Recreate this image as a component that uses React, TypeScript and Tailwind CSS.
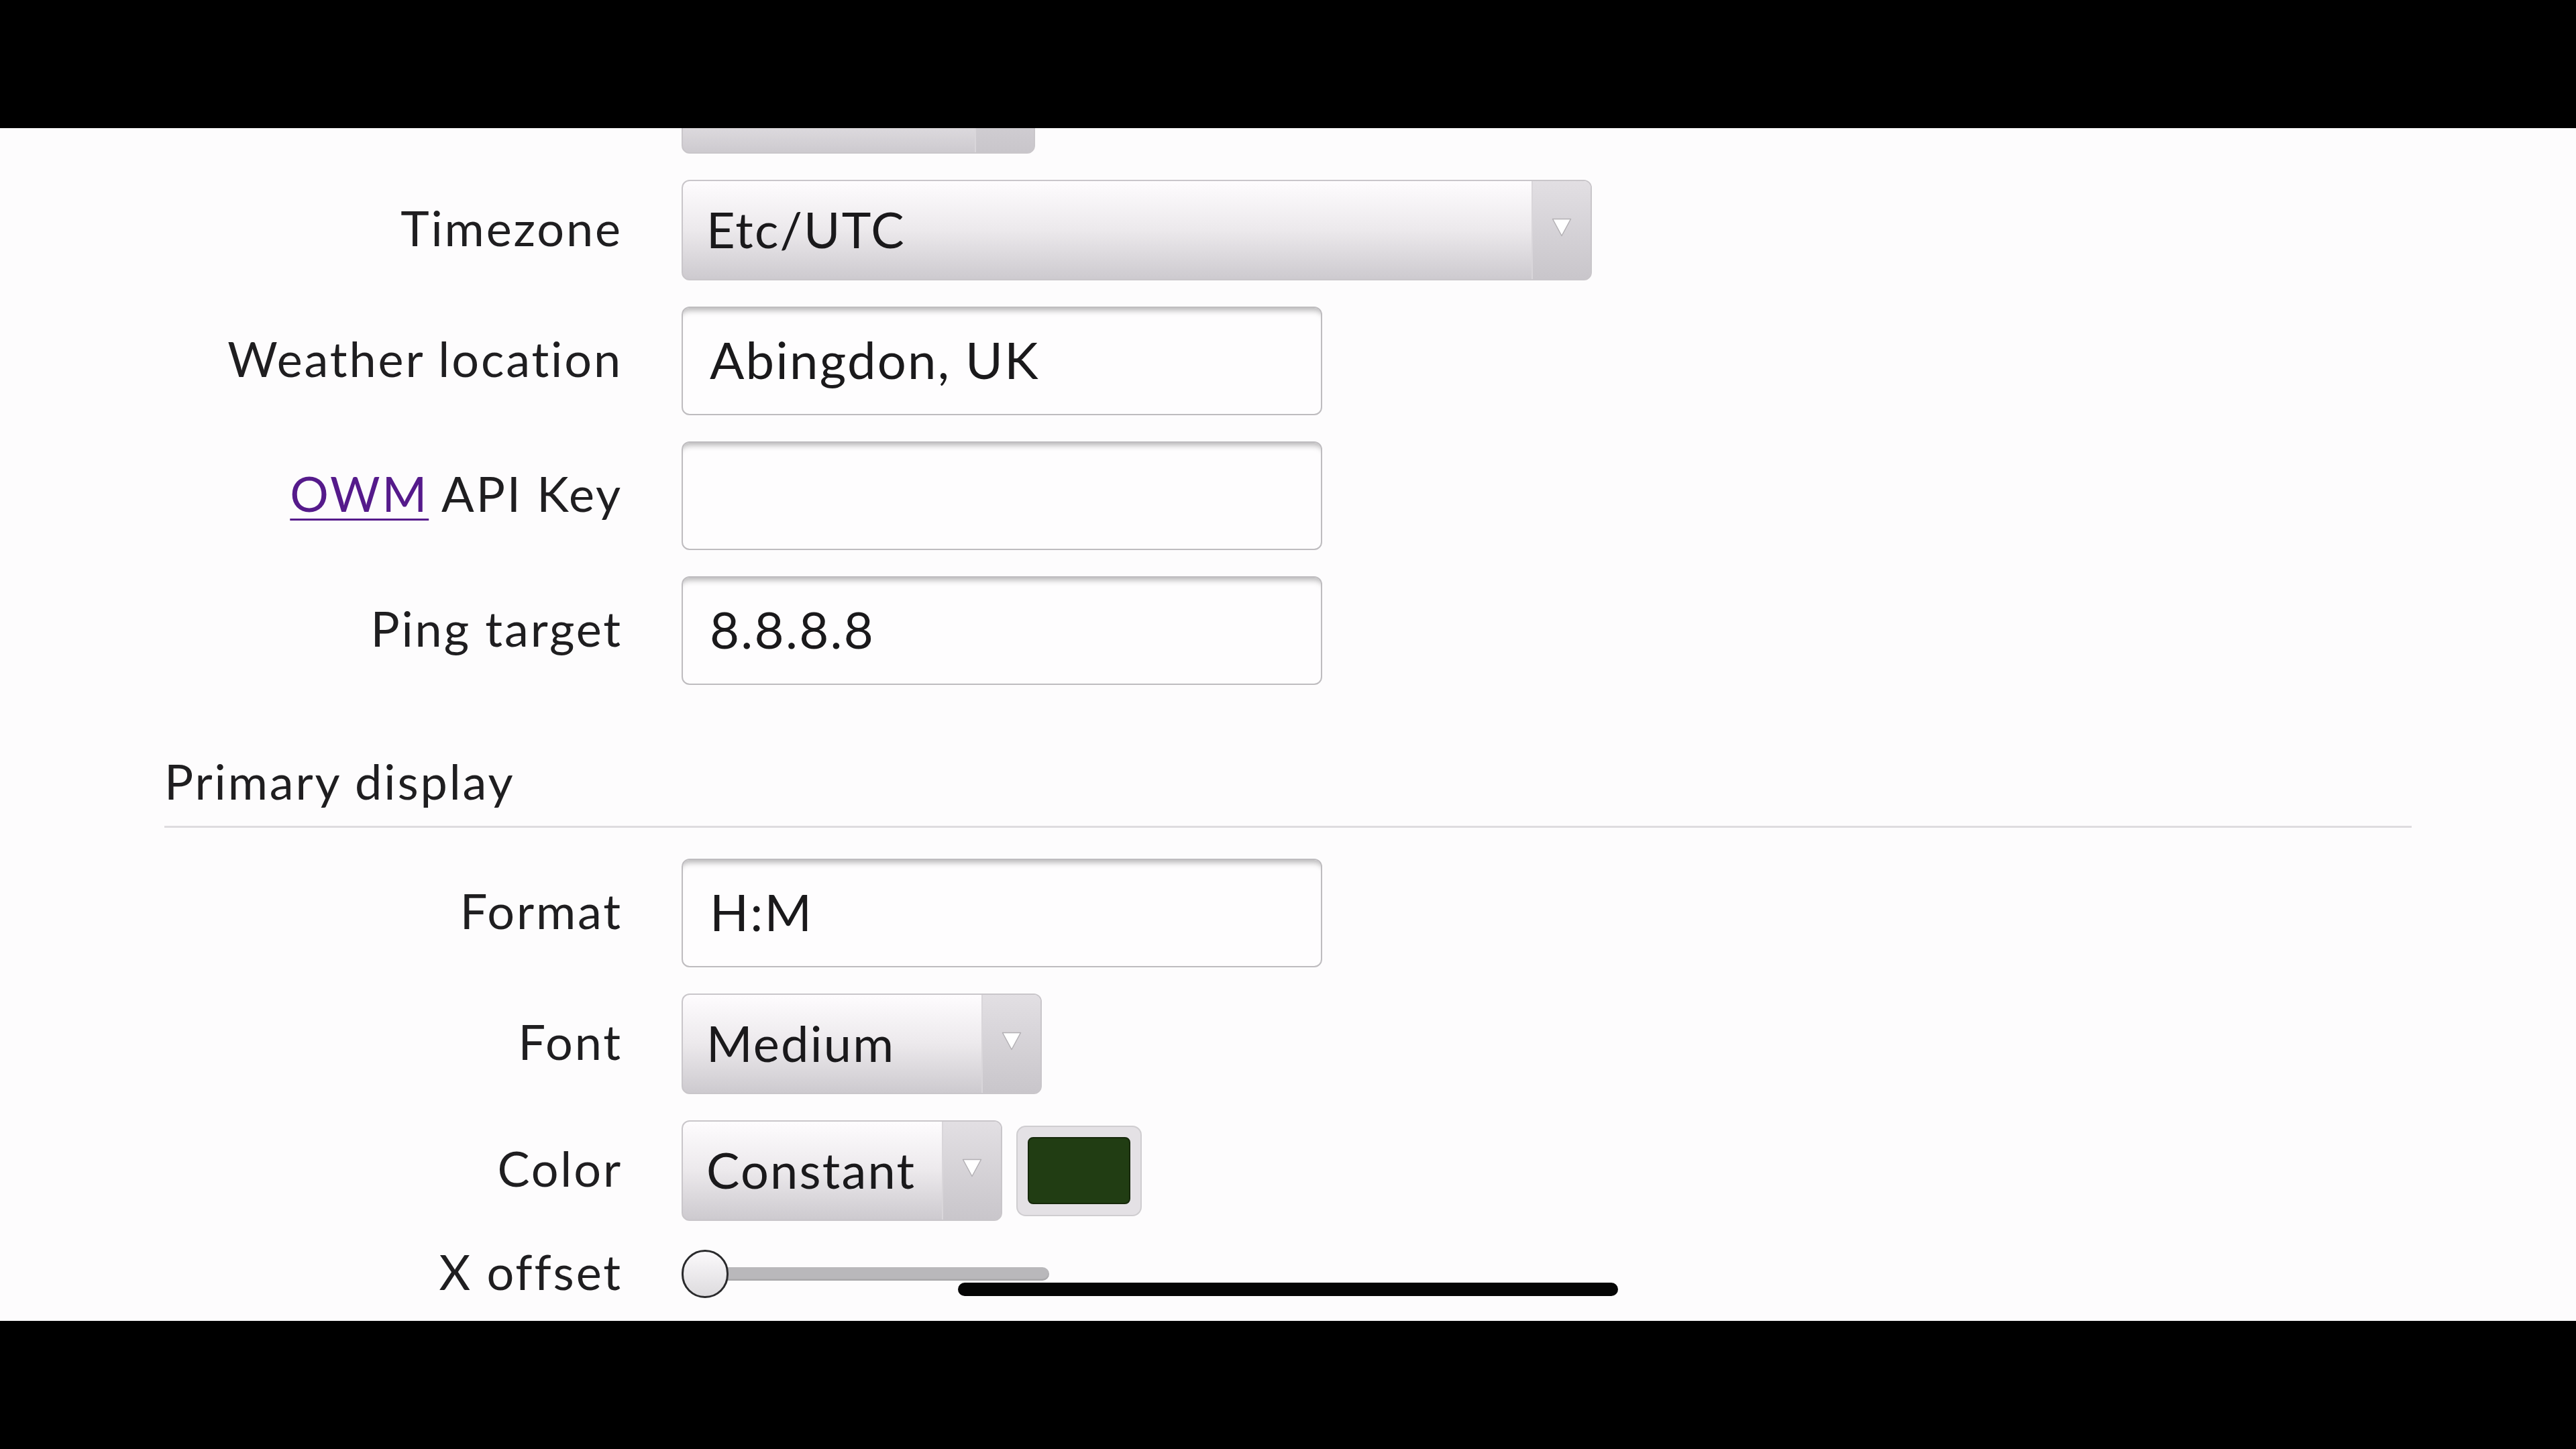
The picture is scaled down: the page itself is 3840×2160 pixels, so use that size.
import React from 'react';

const Arrow = () => (
    <svg width="30" height="28" viewBox="0 0 30 28">
        <path d="M1.5 1.5h27L15 26.5z" fill="#ffffff" stroke="#b3b0b4" strokeWidth="1.5" strokeLinejoin="round" />
    </svg>
);

const Select = ({ value, width }: { value: string; width: string }) => {
    return (
        <div className={`flex h-[150px] ${width} overflow-hidden rounded-[12px] border-2 border-[#c9c6ca] bg-linear-to-b from-[#fefcfe] via-[#ece9ec] to-[#cdcacf]`}>
            <div className="flex flex-1 items-center pb-[4px] pl-[35px] text-[74px] tracking-[0.03em] text-[#1a191b]">{value}</div>
            <div className="flex w-[88px] items-center justify-center border-l-2 border-[#d9d6da] bg-linear-to-b from-[#e2dfe3] to-[#c9c6cb] pb-[8px]">
                <Arrow />
            </div>
        </div>
    );
};

const TextBox = ({ value }: { value: string }) => {
    return (
        <div className="flex h-[162px] w-[955px] items-center rounded-[12px] border-2 border-[#bebcbf] bg-[#fefdfe] pb-[4px] pl-[40px] text-[76px] tracking-[0.03em] text-[#1a191b] shadow-[inset_0_12px_8px_-8px_rgba(0,0,0,0.28)]">
            {value}
        </div>
    );
};

const Row = ({ label, children }: { label: React.ReactNode; children: React.ReactNode }) => {
    return (
        <div className="flex items-center">
            <div className="w-[683px] pb-[8px] text-right text-[72px] tracking-[0.04em] text-[#1f1e20]">{label}</div>
            <div className="ml-[88px] flex items-center gap-[21px]">{children}</div>
        </div>
    );
};

export default function App() {
    return (
        <div className="flex h-[2160px] w-[3840px] flex-col bg-black font-['Lato',sans-serif]">
            <div className="h-[191px] shrink-0 bg-black" />
            <div className="relative h-[1778px] shrink-0 overflow-hidden bg-[#fdfcfd] px-[245px]">
                <div className="mt-[-112px] flex flex-col gap-[39px]">
                    <Row label="">
                        <Select value="" width="w-[527px]" />
                    </Row>
                    <Row label="Timezone">
                        <Select value="Etc/UTC" width="w-[1357px]" />
                    </Row>
                    <Row label="Weather location">
                        <TextBox value="Abingdon, UK" />
                    </Row>
                    <Row label={<><a className="text-[#551a8b] underline decoration-[3px] underline-offset-[10px]">OWM</a> API Key</>}>
                        <TextBox value="" />
                    </Row>
                    <Row label="Ping target">
                        <TextBox value="8.8.8.8" />
                    </Row>
                </div>

                <div className="mt-[102px] border-b-[3px] border-[#dedcdf] pb-[26px] text-[72px] leading-[82px] tracking-[0.04em] text-[#1f1e20]">
                    Primary display
                </div>

                <div className="mt-[46px] flex flex-col gap-[39px]">
                    <Row label="Format">
                        <TextBox value="H:M" />
                    </Row>
                    <Row label="Font">
                        <Select value="Medium" width="w-[537px]" />
                    </Row>
                    <Row label="Color">
                        <Select value="Constant" width="w-[478px]" />
                        <div className="flex h-[135px] w-[187px] items-center justify-center rounded-[14px] border-2 border-[#cfcdd0] bg-[#e4e1e5]">
                            <div className="h-[100px] w-[153px] rounded-[8px] border-2 border-[#16280b] bg-[#213d13]" />
                        </div>
                    </Row>
                    <div className="mt-[-18px]">
                        <Row label="X offset">
                            <div className="relative flex h-[72px] w-[548px] items-center">
                                <div className="h-[20px] w-full rounded-full bg-[#b9b8bb] shadow-[inset_0_-2px_2px_rgba(0,0,0,0.12)]" />
                                <div className="absolute left-0 top-0 h-[72px] w-[70px] rounded-full border-[3px] border-[#2a2a2c] bg-linear-to-b from-[#fbf9fb] to-[#dddbde]" />
                            </div>
                        </Row>
                    </div>
                </div>

                <div className="absolute left-[1428px] top-[1721px] h-[20px] w-[984px] rounded-full bg-[#050505]" />
            </div>
            <div className="flex-1 bg-black" />
        </div>
    );
}
